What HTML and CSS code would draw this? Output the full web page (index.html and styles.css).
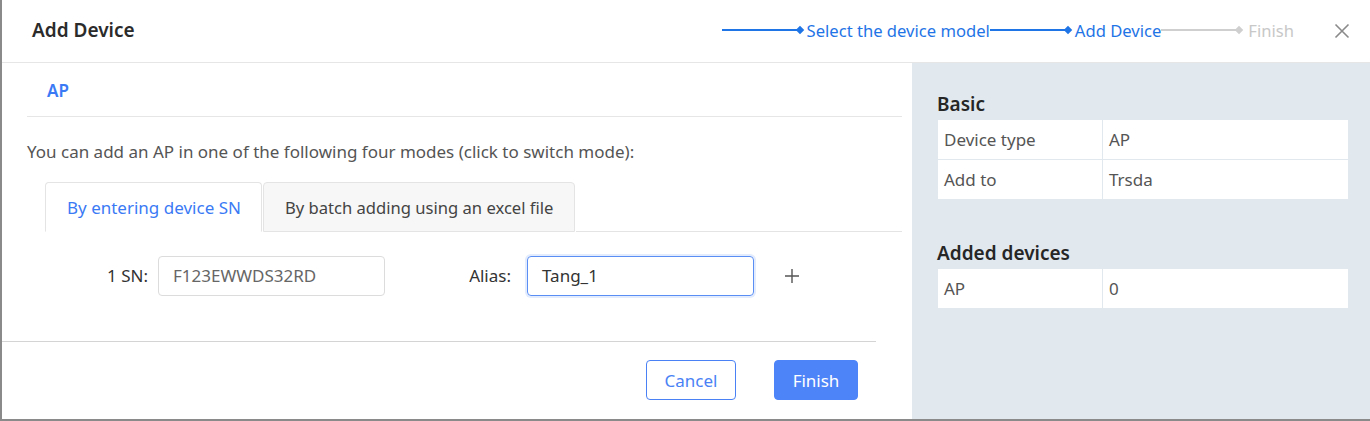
FILE: index.html
```html
<!DOCTYPE html>
<html>
<head>
<meta charset="utf-8">
<link rel="stylesheet" href="styles.css">
</head>
<body>
<div class="screen">
  <div class="dialog">
    <div class="header">
      <div class="title">Add Device</div>
      <div class="steps">
        <span class="line done"></span><span class="dot done"></span><span class="step done">Select the device model</span>
        <span class="line done"></span><span class="dot done"></span><span class="step done">Add Device</span>
        <span class="line todo"></span><span class="dot todo"></span><span class="step todo">Finish</span>
      </div>
      <svg class="close" width="16" height="16" viewBox="0 0 16 16"><path d="M1.5 1.5 L14.5 14.5 M14.5 1.5 L1.5 14.5" stroke="#8a8a8a" stroke-width="1.6" fill="none"/></svg>
    </div>
    <div class="body">
      <div class="main">
        <div class="section-title"><span>AP</span></div>
        <div class="desc">You can add an AP in one of the following four modes (click to switch mode):</div>
        <div class="tabs">
          <div class="tab active">By entering device SN</div>
          <div class="tab second">By batch adding using an excel file</div>
          <div class="tab-rest"></div>
        </div>
        <div class="form-row">
          <label class="lbl sn">1 SN:</label>
          <div class="input">F123EWWDS32RD</div>
          <label class="lbl alias">Alias:</label>
          <div class="input focus">Tang_1</div>
          <svg class="plus" width="16" height="16" viewBox="0 0 16 16"><path d="M8 1 V15 M1 8 H15" stroke="#555" stroke-width="1.4" fill="none"/></svg>
        </div>
        <div class="footer">
          <button class="btn cancel">Cancel</button>
          <button class="btn primary">Finish</button>
        </div>
      </div>
      <div class="side">
        <div class="side-title">Basic</div>
        <div class="table">
          <div class="row"><div class="cell k">Device type</div><div class="cell v">AP</div></div>
          <div class="row"><div class="cell k">Add to</div><div class="cell v">Trsda</div></div>
        </div>
        <div class="side-title second">Added devices</div>
        <div class="table">
          <div class="row"><div class="cell k">AP</div><div class="cell v">0</div></div>
        </div>
      </div>
    </div>
  </div>
</div>
</body>
</html>
```

FILE: styles.css
```css
* { box-sizing: border-box; }
html, body { margin: 0; padding: 0; }
body {
  width: 1370px;
  height: 421px;
  overflow: hidden;
  background: #8a8a8a;
  font-family: "Noto Sans", "Open Sans", sans-serif;
}
.screen {
  padding: 0 0 2px 2px;
  height: 421px;
}
.dialog {
  background: #fff;
  height: 419px;
  display: flex;
  flex-direction: column;
}
.header {
  height: 63px;
  border-bottom: 1px solid #e6e6e6;
  display: flex;
  align-items: center;
  padding: 0 20px 0 30px;
  flex-shrink: 0;
}
.title {
  font-size: 19px;
  font-weight: 600;
  color: #2b2b2b;
  flex: 1;
  padding-bottom: 2px;
}
.steps {
  display: flex;
  align-items: center;
  font-size: 16.6px;
  padding-bottom: 2px;
}
.line { display: inline-block; width: 77px; height: 2px; }
.line.done { background: #1f74e6; }
.line.todo { background: #cfcfcf; }
.dot { display: inline-block; width: 6px; height: 6px; transform: rotate(45deg); margin: 0 4px 0 -2px; }
.dot.done { background: #1f74e6; }
.dot.todo { background: #cfcfcf; }
.step.done { color: #1f74e6; }
.step.todo { color: #c8c8c8; margin-left: 2px; }
.close { margin-left: 40px; margin-top: 0; }

.body { flex: 1; display: flex; }
.main { width: 910px; display: flex; flex-direction: column; }
.section-title {
  height: 54px;
  margin-left: 25px;
  margin-right: 10px;
  border-bottom: 1px solid #e6e6e6;
  display: flex;
  align-items: center;
  padding-left: 20px;
  padding-top: 1px;
  font-size: 17px;
  font-weight: 600;
  color: #3b7af5;
}
.desc {
  font-size: 17px;
  color: #555;
  padding-left: 25px;
  margin-top: 23px;
  line-height: 24px;
}
.tabs {
  display: flex;
  margin-top: 18px;
  margin-left: 43px;
  margin-right: 10px;
  height: 50px;
}
.tab {
  border: 1px solid #e4e4e4;
  border-bottom: 1px solid #e4e4e4;
  border-radius: 4px 4px 0 0;
  padding: 0 21px;
  display: flex;
  align-items: center;
  font-size: 17px;
  color: #444;
  background: #f7f7f7;
  margin-right: 1px;
}
.tab.second { padding: 0 21px 0 21px; font-size: 16.6px; }
.tab.active {
  background: #fff;
  color: #3b7af5;
  border-bottom-color: #fff;
  padding: 0 20px 0 21px;
}
.tab-rest { flex: 1; border-bottom: 1px solid #e4e4e4; }
.form-row {
  display: flex;
  align-items: center;
  margin-top: 23px;
  height: 41px;
}
.lbl { font-size: 17px; color: #333; text-align: right; }
.lbl.sn { width: 146px; margin-right: 10px; }
.lbl.alias { width: 126px; margin-right: 16px; }
.input {
  width: 227px;
  height: 40px;
  border: 1px solid #dcdcdc;
  border-radius: 4px;
  padding-left: 14px;
  display: flex;
  align-items: center;
  font-size: 17px;
  color: #666;
}
.input.focus {
  border-color: #5a8ef5;
  color: #333;
  box-shadow: 0 0 0 2px #e3ecfd;
}
.plus { margin-left: 30px; }
.footer {
  margin-top: 45px;
  border-top: 1px solid #d4d4d4;
  width: 874px;
  display: flex;
  justify-content: flex-end;
  padding-top: 18px;
  padding-right: 18px;
  gap: 38px;
}
.btn {
  height: 40px;
  border-radius: 4px;
  font-family: inherit;
  font-size: 17px;
  padding: 0;
}
.btn.cancel {
  width: 90px;
  background: #fff;
  border: 1px solid #4a82f5;
  color: #4a82f5;
}
.btn.primary {
  width: 84px;
  background: #4d84f8;
  border: 1px solid #4d84f8;
  color: #fff;
}
.side {
  flex: 1;
  background: #e1e9ef;
  padding: 29px 20px 0 25px;
}
.side-title {
  font-size: 19px;
  font-weight: 600;
  color: #262626;
  line-height: 24px;
  margin-bottom: 4px;
}
.side-title.second { margin-top: 42px; }
.table {
  margin-left: 1px;
  width: 410px;
  display: flex;
  flex-direction: column;
  gap: 1px;
}
.row { display: flex; gap: 1px; height: 39px; }
.cell {
  background: #fff;
  display: flex;
  align-items: center;
  padding-left: 6px;
  font-size: 17px;
  color: #555;
}
.cell.k { width: 164px; }
.cell.v { flex: 1; }
```
